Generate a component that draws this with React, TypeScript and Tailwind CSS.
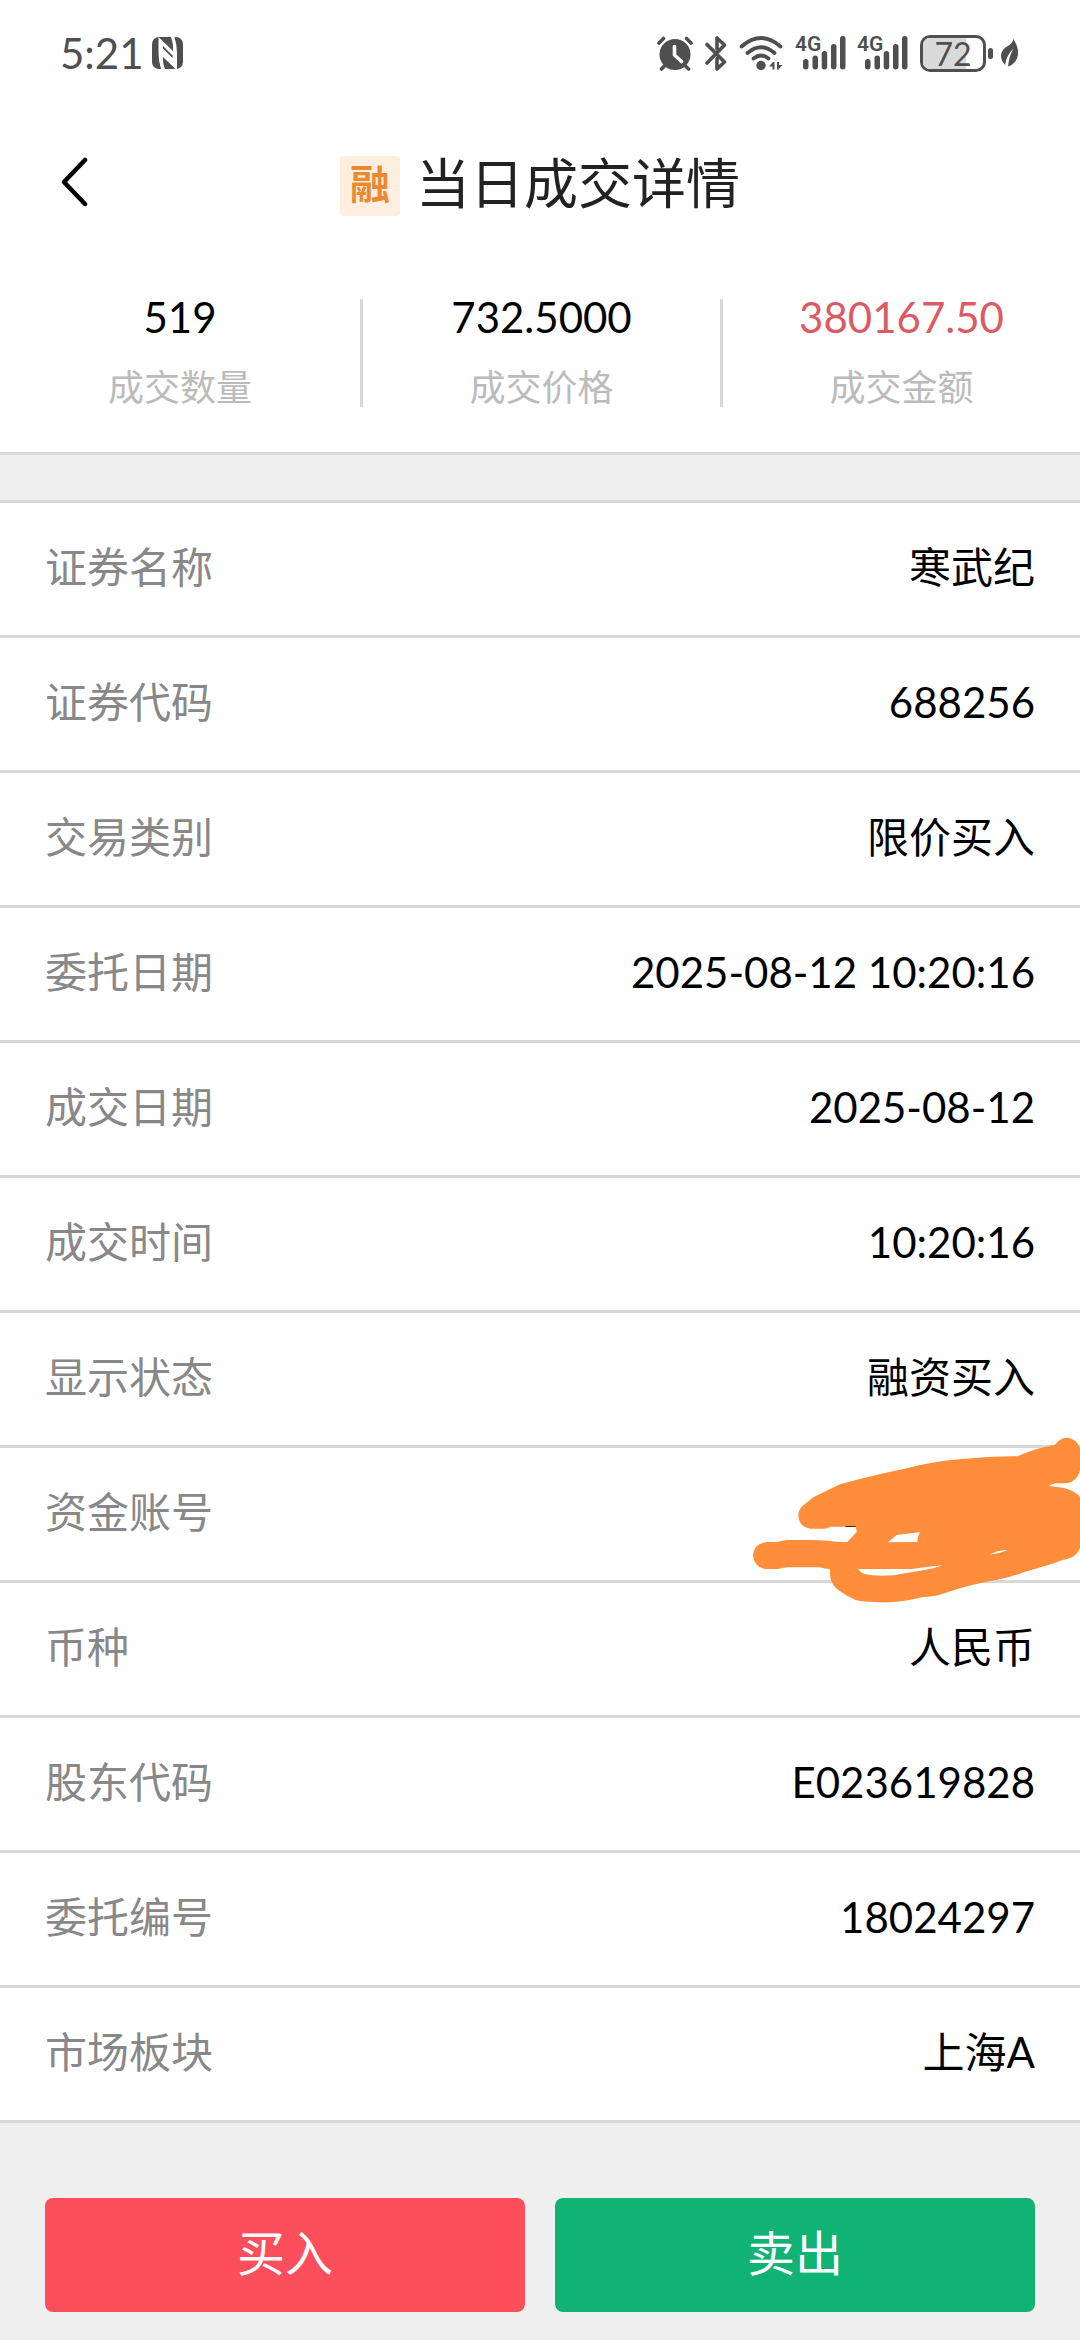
interface Detail {
  label: string;
  value: string;
  hidden?: boolean;
}

const stats = [
  { label: "成交数量", value: "519", color: "text-black" },
  { label: "成交价格", value: "732.5000", color: "text-black" },
  { label: "成交金额", value: "380167.50", color: "text-[#db5a64]" },
];

const details: Detail[] = [
  { label: "证券名称", value: "寒武纪" },
  { label: "证券代码", value: "688256" },
  { label: "交易类别", value: "限价买入" },
  { label: "委托日期", value: "2025-08-12 10:20:16" },
  { label: "成交日期", value: "2025-08-12" },
  { label: "成交时间", value: "10:20:16" },
  { label: "显示状态", value: "融资买入" },
  { label: "资金账号", value: "", hidden: true },
  { label: "币种", value: "人民币" },
  { label: "股东代码", value: "E023619828" },
  { label: "委托编号", value: "18024297" },
  { label: "市场板块", value: "上海A" },
];

function NfcIcon() {
  return (
    <svg width="31" height="32" viewBox="0 0 31 32" aria-hidden="true">
      <rect width="31" height="32" rx="7" fill="#4f4f4f" />
      <path d="M6.5 0 L21 14 V9 Q20.500 4 19 0 H22.500 Q25 8 25 16 V32 H23.500 L11 20 V24 Q11.500 29 13 32 H9 Q6.500 24 6.500 16 Z" fill="#fff" />
      <path d="M11 11.500 L20.500 21 V18.500 L11 9 Z" fill="#4f4f4f" />
    </svg>
  );
}

function AlarmIcon() {
  return (
    <svg width="36" height="35" viewBox="0 0 36 35" aria-hidden="true">
      <circle cx="18" cy="18.500" r="15.500" fill="#4f4f4f" />
      <g fill="none" stroke="#4f4f4f" strokeWidth="3.600" strokeLinecap="round">
        <path d="M2 7 L6.500 2.500" />
        <path d="M29.500 2.500 L34 7" />
        <path d="M7.500 30 L4.500 33" />
        <path d="M28.500 30 L31.500 33" />
      </g>
      <path d="M17.500 10.500 V19 L24.500 25.500" fill="none" stroke="#fff" strokeWidth="3.600" strokeLinecap="round" strokeLinejoin="round" />
    </svg>
  );
}

function BluetoothIcon() {
  return (
    <svg width="22" height="35" viewBox="0 0 22 35" fill="none" stroke="#4f4f4f" strokeWidth="3.600" strokeLinecap="round" strokeLinejoin="round" aria-hidden="true">
      <path d="M2 8.500 L19.500 26 L12 33 V22.500" />
      <path d="M2 27 L19.500 9 L12 2 V13" />
    </svg>
  );
}

function WifiIcon() {
  return (
    <svg width="45" height="35" viewBox="0 0 45 35" aria-hidden="true">
      <g fill="none" stroke="#4f4f4f" strokeWidth="3.800" strokeLinecap="round">
        <path d="M2.500 10.500 Q22 -6.500 41.500 10.500" />
        <path d="M8.500 17 Q22 5.500 35.500 17" />
        <path d="M14.500 22.500 Q22 16.500 29.500 22.500" />
      </g>
      <circle cx="22" cy="29.500" r="4.700" fill="#4f4f4f" />
      <path d="M30 30.500 L34 26 H35.500 V33.500 H33.500 V30.500 Z" fill="#4f4f4f" />
      <path d="M43.500 29 L39.500 33.500 H38 V26 H40 V29 Z" fill="#4f4f4f" />
    </svg>
  );
}

function SignalIcon() {
  return (
    <div className="relative">
      <svg width="50" height="35" viewBox="0 0 50 35" fill="#4f4f4f" aria-hidden="true">
        <rect x="7" y="23" width="5.500" height="10.500" rx="2.700" />
        <rect x="16.500" y="19.500" width="5.500" height="14" rx="2.700" />
        <rect x="25.700" y="15" width="5.500" height="18.500" rx="2.700" />
        <rect x="35" y="8" width="5.500" height="25.500" rx="2.700" />
        <rect x="44" y="0" width="5.500" height="33.500" rx="2.700" />
      </svg>
      <span className="absolute -top-1 -left-px font-['Roboto',sans-serif] text-[21px] leading-6 font-semibold text-[#4f4f4f]">4G</span>
    </div>
  );
}

function Battery({ level }: { level: number }) {
  return (
    <div className="flex items-center gap-0.5">
      <div className="relative flex h-[37px] w-[66px] items-center justify-center overflow-hidden rounded-[10px] border-3 border-[#4f4f4f]">
        <div className="absolute inset-y-0 left-0 bg-[#d9d9d9]" style={{ width: `${level}%` }} />
        <span className="relative text-[32px] leading-[31px] text-[#4f4f4f]">{level}</span>
      </div>
      <div className="h-[11px] w-[5px] rounded-sm bg-[#4f4f4f]" />
    </div>
  );
}

function LeafIcon() {
  return (
    <svg width="17" height="28" viewBox="0 0 17 28" aria-hidden="true">
      <path d="M12.500 0 Q18 9 17 15.500 Q15.500 25 7 27.500 Q8 17 12.500 9.500 Q5.500 16 4 26 Q-1.500 20 .5 14 Q2 9.500 6 7.500 Q11.500 4.500 12.500 0 Z" fill="#4f4f4f" />
    </svg>
  );
}

// Marker strokes that cover the account number
function Scribble() {
  return (
    <svg width="330" height="168" viewBox="90 108 990 504" className="absolute right-0 -top-3 z-10" aria-hidden="true">
      <path
        fill="#ff8d3a"
        fillRule="evenodd"
        d="M1080 145 Q1068 114 1040 113 Q1020 114 1004 135 Q950 143 892 169 Q820 168 720 178 Q640 184 560 205 Q450 228 360 253 Q320 272 280 292 L250 316 Q234 330 235 348 Q238 382 272 386 L315 386 Q325 383 333 380 L408 380 L410 396 L382 426 Q350 427 325 422 Q300 420 270 420 L200 420 Q185 421 172 426 L140 426 Q102 430 99 466 Q102 504 138 507 L175 507 Q190 503 205 502 L298 502 Q315 507 330 507 L330 525 Q332 550 350 566 Q375 586 408 601 Q450 608 510 607 Q560 604 605 592 Q630 590 655 586 L705 569 Q790 545 830 540 Q880 530 915 515 Q990 495 1027 480 Q1060 475 1072 458 L1080 445 L1080 290 Q1055 262 985 258 Q995 252 1008 250 L1040 250 Q1070 245 1080 212 Z
        M504 427 L530 405 L601 396 Q592 408 592 426 Z
        M414 507 L575 507 Q610 502 640 499 L668 496 Q640 507 610 511 Q560 519 520 526 Q470 530 436 523 Q420 517 414 507 Z
        M808 464 L832 454 L863 449 Q845 459 808 464 Z"
      />
      <path d="M376 378 H407 V381 H376 Z" fill="#3b2a1c" />
    </svg>
  );
}

export default function App() {
  return (
    <div className="flex min-h-screen flex-col bg-[#efefef] font-['Lato','Noto_Sans_CJK_SC',sans-serif] text-black">
      <header className="bg-white">
        {/* Status bar */}
        <div className="flex h-[106px] items-center justify-between pr-[62px] pl-[60px]">
          <div className="flex items-center gap-2">
            <span className="text-[42px] leading-none text-[#4f4f4f]">5:21</span>
            <NfcIcon />
          </div>
          <div className="flex items-center gap-3">
            <AlarmIcon />
            <BluetoothIcon />
            <WifiIcon />
            <SignalIcon />
            <SignalIcon />
            <div className="flex items-center gap-2">
              <Battery level={72} />
              <LeafIcon />
            </div>
          </div>
        </div>

        {/* Title */}
        <div className="grid grid-cols-[1fr_auto_1fr] items-center pt-10">
          <button aria-label="返回" className="mb-1 ml-[58px] w-8">
            <svg width="32" height="50" viewBox="0 0 32 50" fill="none" stroke="#000" strokeWidth="4.500" strokeLinecap="round" strokeLinejoin="round" aria-hidden="true">
              <path d="M27 3 L6 25 L27 47" />
            </svg>
          </button>
          <div className="flex items-center gap-4 pt-1">
            <span className="flex size-[60px] items-center justify-center rounded bg-[#fdeee0] pb-1 text-[40px] leading-none font-bold text-[#ea8a30]">
              融
            </span>
            <h1 className="pb-1 text-[54px] leading-[68px] text-[#222]">当日成交详情</h1>
          </div>
        </div>
      </header>

      {/* Trade summary */}
      <section className="grid grid-cols-3 border-b-3 border-[#d8d8d8] bg-white pt-[77px] pb-[45px]">
        {stats.map((stat) => (
          <div
            key={stat.label}
            className="flex h-[108px] flex-col items-center justify-between border-l-3 border-[#d8d8d8] first:border-l-0"
          >
            <p className={`text-[42px] leading-9 ${stat.color}`}>{stat.value}</p>
            <p className="text-[36px] leading-10 text-[#bbb]">{stat.label}</p>
          </div>
        ))}
      </section>

      {/* Trade details */}
      <dl className="mt-[45px] border-t-3 border-[#d8d8d8] bg-white">
        {details.map((item) => (
          <div
            key={item.label}
            className="relative flex h-[135px] items-center justify-between border-b-3 border-[#d8d8d8] px-[45px] pb-1 text-[42px] leading-[60px]"
          >
            <dt className="text-[#888]">{item.label}</dt>
            <dd>{item.value}</dd>
            {item.hidden && <Scribble />}
          </div>
        ))}
      </dl>

      <footer className="grid grid-cols-2 gap-[30px] px-[45px] pt-[75px] pb-7 text-[48px] leading-[60px] text-white">
        <button className="h-[114px] rounded-lg bg-[#fd4e5c] pb-1">买入</button>
        <button className="h-[114px] rounded-lg bg-[#11b375] pb-1">卖出</button>
      </footer>
    </div>
  );
}
